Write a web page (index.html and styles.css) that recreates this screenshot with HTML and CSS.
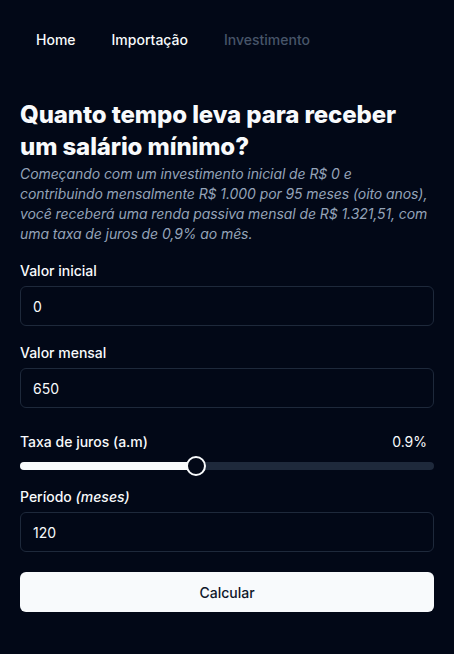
FILE: index.html
```html
<!DOCTYPE html>
<html lang="pt-BR">
<head>
<meta charset="utf-8">
<title>Investimento</title>
<link rel="stylesheet" href="styles.css">
</head>
<body>
<div class="page">
  <nav class="nav">
    <a class="nav-link" href="#">Home</a>
    <a class="nav-link" href="#">Importação</a>
    <a class="nav-link muted" href="#">Investimento</a>
  </nav>
  <main class="content">
    <h1 class="title">Quanto tempo leva para receber um salário mínimo?</h1>
    <p class="desc">Começando com um investimento inicial de R$ 0 e contribuindo mensalmente R$ 1.000 por 95 meses (oito anos), você receberá uma renda passiva mensal de R$ 1.321,51, com uma taxa de juros de 0,9% ao mês.</p>
    <form class="form">
      <div class="field">
        <label class="label">Valor inicial</label>
        <input class="input" type="text" value="0">
      </div>
      <div class="field">
        <label class="label">Valor mensal</label>
        <input class="input" type="text" value="650">
      </div>
      <div class="slider-field">
        <div class="slider-row">
          <span class="label">Taxa de juros (a.m)</span>
          <span class="slider-value">0.9%</span>
        </div>
        <div class="slider">
          <div class="slider-range" style="width: 42.5%"></div>
          <div class="slider-thumb" style="left: 42.5%"></div>
        </div>
      </div>
      <div class="field">
        <label class="label">Período <em class="label-em">(meses)</em></label>
        <input class="input" type="text" value="120">
      </div>
      <button class="button" type="button">Calcular</button>
    </form>
  </main>
</div>
</body>
</html>
```

FILE: styles.css
```css
* { box-sizing: border-box; }
html, body {
  margin: 0;
  padding: 0;
  background: #020817;
  color: #f8fafc;
  font-family: Inter, "Noto Sans", sans-serif;
}
.page {
  min-height: 654px;
  padding: 30px 20px 0 20px;
}
.nav {
  display: flex;
  gap: 36px;
  padding-left: 16px;
  height: 20px;
  align-items: center;
}
.nav-link {
  color: #f8fafc;
  text-decoration: none;
  font-size: 14px;
  font-weight: 500;
  line-height: 20px;
}
.nav-link.muted { color: #475569; }
.content {
  margin-top: 49px;
}
.title {
  margin: 0;
  font-size: 24px;
  line-height: 32px;
  font-weight: 800;
  letter-spacing: -0.1px;
}
.desc {
  margin: 1px 0 0 0;
  font-size: 14px;
  line-height: 20px;
  font-style: italic;
  color: #94a3b8;
  letter-spacing: -0.08px;
}
.form {
  margin-top: 20px;
  display: flex;
  flex-direction: column;
  gap: 20px;
}
.field {
  display: flex;
  flex-direction: column;
  gap: 8px;
}
.label {
  font-size: 14px;
  line-height: 14px;
  font-weight: 500;
  color: #f8fafc;
}
.label-em { font-style: italic; }
.input {
  height: 40px;
  width: 100%;
  border: 1px solid #1e293b;
  border-radius: 6px;
  background: #020817;
  color: #f8fafc;
  font-family: inherit;
  font-size: 14px;
  padding: 0 12px;
  outline: none;
}
.slider-field {
  padding-top: 7px;
  display: flex;
  flex-direction: column;
  gap: 13px;
}
.slider-row {
  display: flex;
  justify-content: space-between;
}
.slider-value {
  font-size: 14px;
  line-height: 14px;
  padding-right: 7px;
}
.slider {
  position: relative;
  height: 8px;
  border-radius: 9999px;
  background: #1e293b;
}
.slider-range {
  height: 100%;
  border-radius: 9999px;
  background: #f8fafc;
}
.slider-thumb {
  position: absolute;
  top: 50%;
  width: 20px;
  height: 20px;
  border-radius: 50%;
  border: 2px solid #f8fafc;
  background: #020817;
  transform: translate(-50%, -50%);
}
.button {
  height: 40px;
  width: 100%;
  border: none;
  border-radius: 6px;
  background: #f8fafc;
  color: #0f172a;
  font-family: inherit;
  font-size: 14px;
  font-weight: 500;
}
```
